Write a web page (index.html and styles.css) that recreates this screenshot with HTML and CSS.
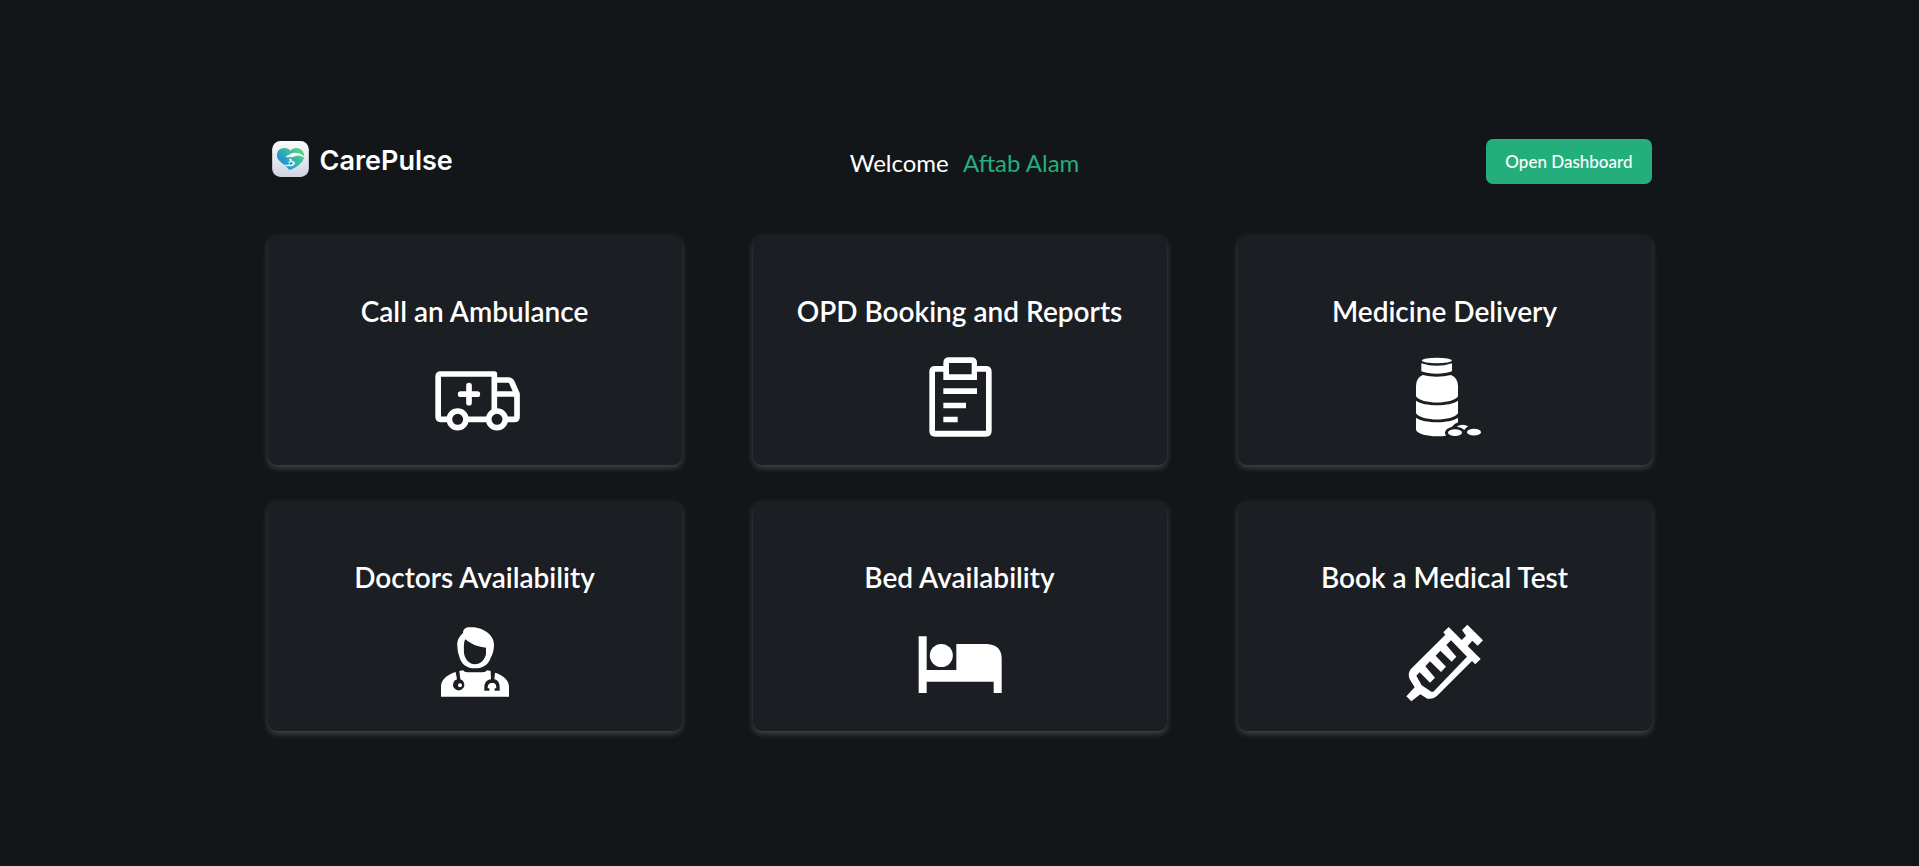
FILE: index.html
```html
<!DOCTYPE html>
<html lang="en">
<head>
<meta charset="utf-8">
<meta name="viewport" content="width=device-width, initial-scale=1">
<title>CarePulse</title>
<link rel="stylesheet" href="styles.css">
</head>
<body>
<div class="page">
  <header class="header">
    <div class="brand">
      <svg class="brand-mark" viewBox="36 33 110 108" aria-hidden="true">
        <defs>
          <linearGradient id="tile" x1="0" y1="0" x2="0" y2="1"><stop offset="0" stop-color="#fcfcfd"/><stop offset="1" stop-color="#cfd3df"/></linearGradient>
          <linearGradient id="heart" x1="0.1" y1="0.8" x2="0.9" y2="0.2"><stop offset="0" stop-color="#168ae0"/><stop offset="0.5" stop-color="#2fb0b4"/><stop offset="1" stop-color="#55d080"/></linearGradient>
        </defs>
        <rect x="36" y="33" width="110" height="108" rx="25" fill="url(#tile)"/>
        <path fill="url(#heart)" d="M91 62C84 52 66 51 56 60C49 67 49 80 54 88C61 98 78 108 88 120C98 118 122 106 130 88C135 75 130 60 118 56C107 52 97 55 91 62Z"/>
        <path fill="#f3f7fa" d="M78 78C85 75 92 69 101 68L114 69C121 70 126 74 132 79L130 82C121 77 113 77 107 78C100 82 91 80 85 82C81 83 78 81 78 78Z"/>
        <path fill="#eef2f7" d="M86 87L93 85L95 92L103 95L105 101L99 107C92 111 86 108 77 108L69 104L84 104L89 99L82 96L90 94Z"/>
        <path fill="#2aa6c4" d="M90 97L96 96L98 101L92 105L87 102Z"/>
      </svg>
      <span class="brand-name">CarePulse</span>
    </div>
    <p class="welcome">Welcome <span class="user">Aftab Alam</span></p>
    <button class="button" type="button">Open Dashboard</button>
  </header>
  <main class="grid">
    <section class="card">
      <h2 class="title">Call an Ambulance</h2>
      <svg class="icon" viewBox="492 360 303 303" aria-hidden="true">
        <g fill="none" stroke="#fff" stroke-width="17" stroke-linejoin="round">
          <path d="M568 583H542Q534.500 583 534.500 575.500V455Q534.500 447 542 447H703V558M618 583H687"/>
          <path d="M703 465H745Q752 465 755 471L771 507V575Q771 583 763 583H736M703 507H771"/>
          <circle cx="593" cy="583" r="25"/><circle cx="711" cy="583" r="25"/>
          <path stroke-linecap="round" d="M627 482V533M602 507.500H652"/>
        </g>
      </svg>
    </section>
    <section class="card">
      <h2 class="title">OPD Booking and Reports</h2>
      <svg class="icon" viewBox="507 360 303 303" aria-hidden="true">
        <path fill="#fff" fill-rule="evenodd" d="M610 423V414Q610 397 627 397H694Q711 397 711 414V423H738Q755 423 755 440V618Q755 635 738 635H585Q568 635 568 618V440Q568 423 585 423ZM627 414V448H695V414ZM610 440H585V617H738V440H711V465H610ZM610 490H711V507H610ZM610 533H678V550H610ZM610 575H653V592H610Z"/>
      </svg>
    </section>
    <section class="card">
      <h2 class="title">Medicine Delivery</h2>
      <svg class="icon" viewBox="507 360 303 303" aria-hidden="true">
        <g fill="#fff">
          <ellipse cx="635.500" cy="406.500" rx="45" ry="8.500"/>
          <path d="M589 415Q635 430 681 415V439Q662 446 635 446Q608 446 589 439Z"/>
          <path d="M593 450Q635 460 678 450Q699 459 699 483V514C684 539 588 539 573 514V483Q573 459 593 450Z"/>
          <path d="M573 527C597 545 675 545 699 527V565C683 590 589 590 573 565Z"/>
          <path d="M573 578C597 596 675 596 699 578V592Q688 596 681 605Q660 611 660 623Q660 628 663 632C624 637 581 631 573 615Z"/>
          <path d="M695 605Q712 594 730 604Q721 609 718 615Q709 606 695 605Z"/>
          <ellipse cx="690" cy="623" rx="21" ry="10"/><ellipse cx="747" cy="621.500" rx="21" ry="10"/>
        </g>
      </svg>
    </section>
    <section class="card">
      <h2 class="title">Doctors Availability</h2>
      <svg class="icon" viewBox="252 183 303 303" aria-hidden="true">
        <path fill="#fff" fill-rule="evenodd" d="M369 249C369 237 378 231 392 232C428 231 462 254 462 284Q462 306 452 323C447 342 429 355 405 355C381 355 364 342 359 323Q352 306 352 288C351 272 356 261 369 249ZM376 268C370 278 372 293 372 309C374 327 388 343 405 343C422 343 435 328 438 312V293C416 292 394 283 376 268Z"/>
        <path fill="#fff" d="M303 440V410C303 389 321 374 347 366L351 388A17 17 0 1 0 361 388L358 363L369 361Q373 367 382 367H428Q438 367 441 361L452 363L453 388C441 389 433 398 433 412V422H448V415H443C443 404 447 399 457 399C467 399 469 405 469 415H464V422H479V412C479 398 472 389 463 388L465 368C491 376 507 391 507 410V440Z"/>
        <circle cx="360" cy="406" r="6" fill="#fff"/>
        <path fill="#fff" d="M447 405Q457 398 467 405V413H461V425H453V413H447Z"/>
      </svg>
    </section>
    <section class="card">
      <h2 class="title">Bed Availability</h2>
      <svg class="icon" viewBox="177 183 303 303" aria-hidden="true">
        <path fill="#fff" d="M206 259H230V360H319V282H411Q455 284 455 327V429H431V395H230V429H206Z"/>
        <circle cx="274" cy="316.500" r="34.500" fill="#fff"/>
      </svg>
    </section>
    <section class="card">
      <h2 class="title">Book a Medical Test</h2>
      <svg class="icon" viewBox="252 183 303 303" aria-hidden="true">
        <path fill="#fff" fill-rule="evenodd" d="M416 231L455 270L468 257L456 240L472 224L519 271L503 287L487 272L473 288L512 327L496 343L486 333L383 436Q370 449 352 446L331 433L304 454L289 439L314 412L300 389Q291 374 302 358L406 254L400 247ZM423 271L409 285L439 320L425 335L391 302L377 317L408 350L393 366L360 334L346 349L375 383L360 398L329 367L319 377L335 406L364 425Q369 427 373 422L471 320Z"/>
      </svg>
    </section>
  </main>
</div>
</body>
</html>
```
FILE: styles.css
```css
* { box-sizing: border-box; }

body {
  margin: 0;
  min-height: 100vh;
  background: #131619;
  color: #fff;
  font-family: Lato, "Open Sans", sans-serif;
}

.page {
  max-width: 1384px;
  margin: 0 auto;
  padding: 139px 0 64px;
}

.header {
  display: grid;
  grid-template-columns: 1fr auto 1fr;
  align-items: center;
  margin-bottom: 51px;
}

.brand {
  display: flex;
  align-items: center;
  gap: 11px;
  padding: 0 4px 5px;
}

.brand-mark {
  width: 37px;
  height: 36px;
}

.brand-name {
  padding-top: 4px;
  font-family: Inter, sans-serif;
  font-size: 27px;
  font-weight: 600;
  line-height: 32px;
}

.welcome {
  margin: 0;
  padding: 2px 0 0 10px;
  font-size: 24px;
  line-height: 32px;
}

.user {
  margin-left: 8px;
  color: #24ae7c;
}

.button {
  justify-self: end;
  padding: 11px 19px;
  border: 0;
  border-radius: 7px;
  background: #24ae7c;
  color: #fff;
  font: 500 17px/23px Lato, "Open Sans", sans-serif;
  cursor: pointer;
}

.grid {
  display: grid;
  grid-template-columns: repeat(3, 1fr);
  gap: 36px 71px;
}

.card {
  display: flex;
  flex-direction: column;
  align-items: center;
  gap: 16px;
  padding: 58px 24px 19px;
  border-radius: 9px;
  background: #1b1e22;
  box-shadow: 0 3px 6px rgba(255, 255, 255, 0.2);
}

.title {
  margin: 0;
  font-size: 28px;
  font-weight: 600;
  line-height: 36px;
  text-align: center;
}

.icon {
  width: 101px;
  height: 101px;
}
```
